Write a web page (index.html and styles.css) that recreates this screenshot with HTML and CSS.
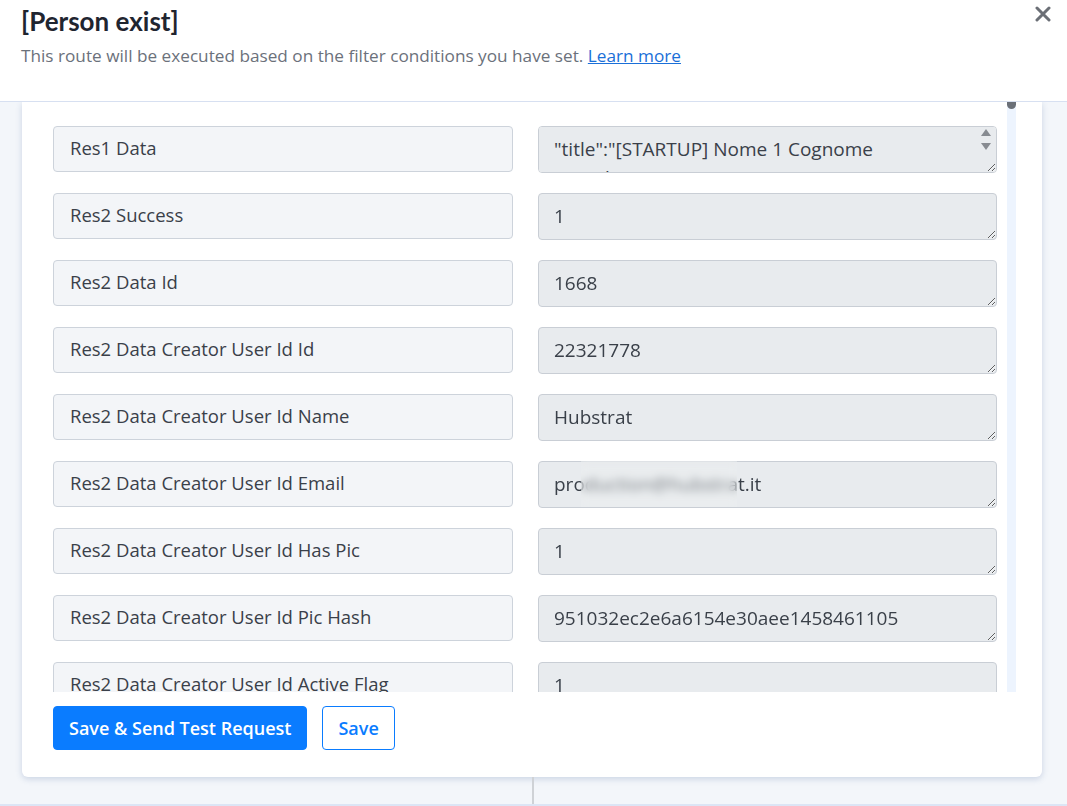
FILE: index.html
```html
<!DOCTYPE html>
<html lang="en">
<head>
  <meta charset="UTF-8">
  <title>Person exist</title>
  <link rel="stylesheet" href="styles.css">
</head>
<body>
  <header class="route-head">
    <h1>[Person exist]</h1>
    <p>This route will be executed based on the filter conditions you have set. <a href="#">Learn more</a></p>
    <button class="close" type="button" aria-label="Close">
      <svg width="16" height="16" viewBox="0 0 16 16"><path d="M2 2 L14 14 M14 2 L2 14" stroke="#6b6f76" stroke-width="3" stroke-linecap="round"/></svg>
    </button>
  </header>

  <div class="stage">
    <section class="card">
      <div class="card-body">
        <div class="fields">
          <div class="row">
            <div class="key">Res1 Data</div>
            <div class="val">
              <textarea class="long" rows="2">"title":"[STARTUP] Nome 1 Cognome 1","value":0,"currency":"EUR","status":"open"</textarea>
              <span class="arrows">
                <svg width="12" height="9" viewBox="0 0 12 9"><path d="M6 1 L11 8 L1 8 Z" fill="#878b91"/></svg>
                <svg width="12" height="9" viewBox="0 0 12 9"><path d="M1 1 L11 1 L6 8 Z" fill="#878b91"/></svg>
              </span>
            </div>
          </div>
          <div class="row">
            <div class="key">Res2 Success</div>
            <div class="val"><textarea rows="1">1</textarea></div>
          </div>
          <div class="row">
            <div class="key">Res2 Data Id</div>
            <div class="val"><textarea rows="1">1668</textarea></div>
          </div>
          <div class="row">
            <div class="key">Res2 Data Creator User Id Id</div>
            <div class="val"><textarea rows="1">22321778</textarea></div>
          </div>
          <div class="row">
            <div class="key">Res2 Data Creator User Id Name</div>
            <div class="val"><textarea rows="1">Hubstrat</textarea></div>
          </div>
          <div class="row">
            <div class="key">Res2 Data Creator User Id Email</div>
            <div class="val"><textarea rows="1">production@hubstrat.it</textarea><span class="redact"></span></div>
          </div>
          <div class="row">
            <div class="key">Res2 Data Creator User Id Has Pic</div>
            <div class="val"><textarea rows="1">1</textarea></div>
          </div>
          <div class="row">
            <div class="key">Res2 Data Creator User Id Pic Hash</div>
            <div class="val"><textarea rows="1">951032ec2e6a6154e30aee1458461105</textarea></div>
          </div>
          <div class="row">
            <div class="key">Res2 Data Creator User Id Active Flag</div>
            <div class="val"><textarea rows="1">1</textarea></div>
          </div>
        </div>
        <div class="scrollbar"><span class="thumb"></span></div>
      </div>
      <div class="actions">
        <button class="btn primary" type="button">Save &amp; Send Test Request</button>
        <button class="btn outline" type="button">Save</button>
      </div>
    </section>
    <div class="below"><span class="divider"></span></div>
  </div>
</body>
</html>
```

FILE: styles.css
```css
/* route filter panel */
body {
  margin: 0;
  padding: 0;
  font-family: "Open Sans", Lato, sans-serif;
  background-color: #f3f6fa;
  color: #2d333b;
  overflow: hidden;
}

.route-head {
  position: relative;
  height: 102px;
  box-sizing: border-box;
  padding: 4px 21px 0;
  background-color: #fff;
  border-bottom: 1px solid #d7e0f1;
}
.route-head h1 {
  margin: 0;
  font-family: Lato, sans-serif;
  font-size: 26px;
  line-height: 34px;
  font-weight: 700;
  color: #1f2530;
}
.route-head p {
  margin: 6px 0 0;
  font-size: 17.2px;
  line-height: 24px;
  color: #6b717b;
}
.route-head a {
  color: #1a6fd8;
  text-decoration: underline;
}
.close {
  position: absolute;
  top: 6px;
  right: 16px;
  border: 0;
  background: none;
  padding: 0;
  width: 16px;
  height: 16px;
}

.card {
  margin: 0 25px 0 22px;
  background-color: #fff;
  border-radius: 0 0 6px 6px;
  box-shadow: 0 2px 6px rgba(60, 90, 150, 0.22);
}
.card-body {
  display: flex;
  height: 590px;
  overflow: hidden;
  padding: 0 26px 0 31px;
}
.fields {
  flex: 1;
  display: flex;
  flex-direction: column;
  gap: 20px;
  padding-top: 24px;
}
.row {
  display: flex;
  gap: 25px;
}
.key {
  width: 460px;
  height: 46px;
  box-sizing: border-box;
  padding: 0 16px 3px;
  display: flex;
  align-items: center;
  font-size: 18.5px;
  color: #3a4049;
  background-color: #f3f5f8;
  border: 1px solid #cdd3db;
  border-radius: 4px;
  flex-shrink: 0;
}
.val {
  position: relative;
  flex: 1;
  display: flex;
}
.val textarea {
  width: 100%;
  height: 47px;
  box-sizing: border-box;
  margin: 0;
  padding: 8px 15px;
  font-family: "Open Sans", Lato, sans-serif;
  font-size: 19px;
  line-height: 29px;
  color: #3a4049;
  background-color: #e8ebee;
  border: 1px solid #c9ced5;
  border-radius: 4px;
  outline: none;
}
.val textarea.long {
  padding-right: 34px;
  overflow-y: auto;
  scrollbar-width: none;
}
.arrows {
  position: absolute;
  right: 5px;
  top: 2px;
  display: flex;
  flex-direction: column;
  align-items: center;
  gap: 5px;
}
.redact {
  position: absolute;
  left: 43px;
  top: 0;
  width: 156px;
  height: 46px;
  backdrop-filter: blur(4px);
  background-color: rgba(238, 240, 242, 0.35);
}

.scrollbar {
  width: 9px;
  margin-left: 10px;
  background-color: #edf4fe;
}
.thumb {
  display: block;
  height: 7px;
  background-color: #6b7078;
  border-radius: 0 0 5px 5px;
}

.actions {
  display: flex;
  gap: 15px;
  padding: 14px 31px 27px;
}
.btn {
  height: 44px;
  box-sizing: border-box;
  border-radius: 4px;
  font-family: "Open Sans", Lato, sans-serif;
  font-size: 18px;
  font-weight: 600;
  padding: 0 15px;
}
.primary {
  background-color: #0a7cff;
  border: 1px solid #0a7cff;
  color: #fff;
}
.outline {
  background-color: #fff;
  border: 1px solid #0a7cff;
  color: #0a7cff;
}

.below {
  height: 27px;
  border-bottom: 2px solid #dce5f5;
  display: flex;
}
.divider {
  margin-left: 532px;
  width: 2px;
  background-color: #cfd2d6;
}
```
